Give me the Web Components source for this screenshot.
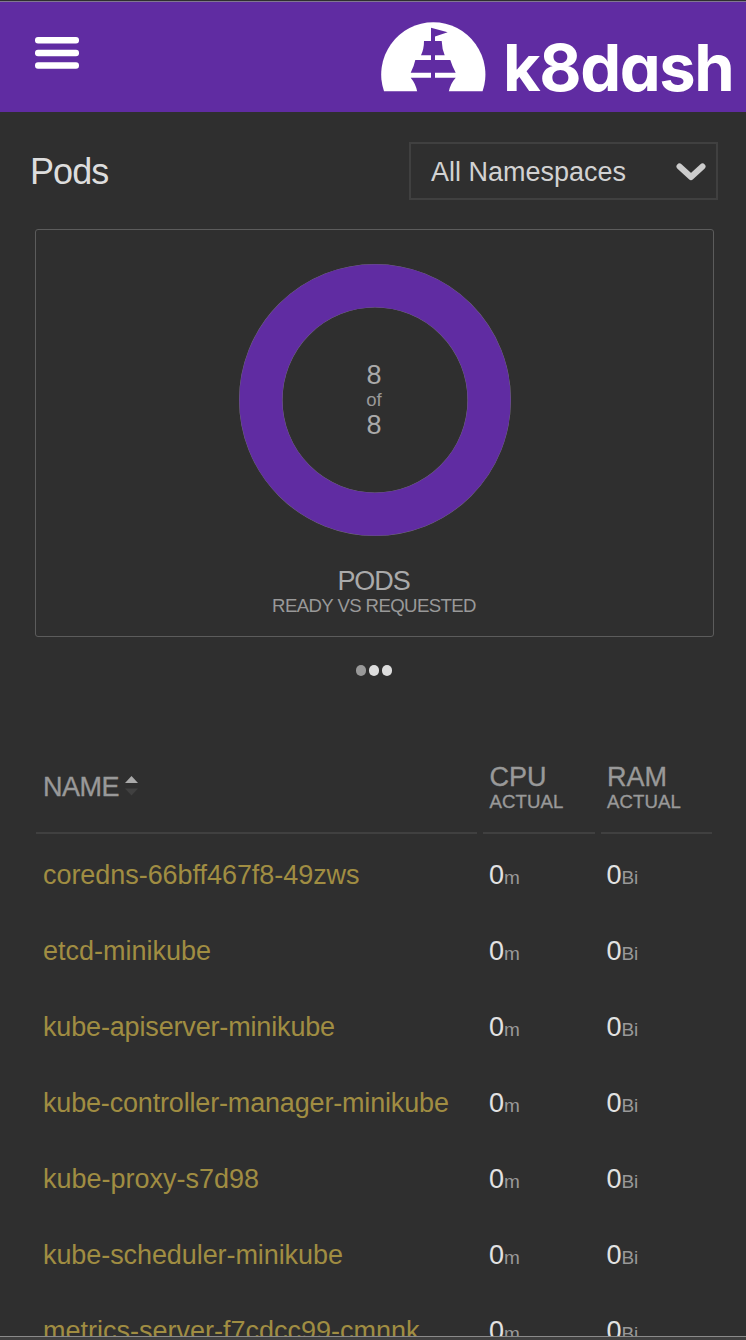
<!DOCTYPE html>
<html lang="en">
<head>
<meta charset="utf-8">
<title>k8dash</title>
<style>
html,body{margin:0;height:1340px;overflow:hidden;background:#2f2f2f}
body{font-family:"Liberation Sans",Arial,sans-serif;color:#ddd}
</style>
</head>
<body>
<k8-app></k8-app>
<script>
function define(name, html, setup) {
  const t = document.createElement('template');
  t.innerHTML = html;
  customElements.define(name, class extends HTMLElement {
    constructor() {
      super();
      this.attachShadow({mode: 'open'}).append(t.content.cloneNode(true));
    }
    connectedCallback() { if (setup) setup(this.shadowRoot, this); }
  });
}

define('k8-menu-button', `
<style>:host{display:block;width:44px;height:32px}svg{display:block}</style>
<svg width="44" height="32" viewBox="0 0 44 32" fill="#fff"><rect y="0" width="44" height="6.6" rx="3"/><rect y="12.7" width="44" height="6.6" rx="3"/><rect y="25.2" width="44" height="6.6" rx="3"/></svg>`);

define('k8-logo', `
<style>
:host{display:flex;align-items:flex-start;color:#fff}
svg{display:block;margin-top:20px}
span{font:700 65px/79px Inter,"Noto Sans",sans-serif;font-feature-settings:"cv11";letter-spacing:-1.400px;margin:26px -1.400px 0 17px;white-space:nowrap}
</style>
<svg width="105" height="70" viewBox="0 0 105 70"><path fill="#fff" d="M3 69.300A52.100 52.100 0 1 1 101.600 69.300Z"/>
<path fill="#602ca2" d="M50 5.700L66.700 10.300 54 14.500V19h6.700q.3 8 3 14.300H54V38h15.300q2 6.500 5.400 12.700H54v5h20.700q-5.500 6-7 14.300H36.300Q35 62 29.700 55.700H50v-5H29.700Q33 44.500 34.300 38H50v-4.700H40Q43 27 43 19h7z"/></svg>
<span>k8dash</span>`);

define('k8-header', `
<style>:host{display:flex;box-sizing:border-box;height:112px;border-top:1px solid #2f2f2f;background:#602ca2;box-shadow:inset 0 1px #817791;justify-content:space-between;align-items:flex-start;padding:1px 14px 0 35px}
k8-menu-button{margin-top:35px}</style>
<k8-menu-button></k8-menu-button><k8-logo></k8-logo>`);

define('k8-select', `
<style>:host{display:flex;box-sizing:border-box;width:309px;height:58px;border:2px solid #404040;align-items:center;justify-content:space-between;padding:2px 10px 0 20px;font-size:27px;line-height:32px;color:#d2d2d2}</style>
<slot></slot><svg width="30" height="18" viewBox="0 0 30 18" fill="none" stroke="#ccc" stroke-width="6" stroke-linecap="round" stroke-linejoin="round"><path d="M3.500 3.500L15 14 26.500 3.500"/></svg>`);

define('k8-toolbar', `
<style>:host{display:flex;height:58px;padding:30px 28px 0 30px;justify-content:space-between;align-items:center}
h1{margin:2px 0 0;font-weight:400;font-size:36px;line-height:42px;letter-spacing:-.9px;color:#ddd}</style>
<h1>Pods</h1><k8-select>All Namespaces</k8-select>`);

define('k8-donut', `
<style>:host{display:grid;width:272px;height:272px;place-items:center}
svg,.t{grid-area:1/1}
.t{text-align:center;font-size:27px;line-height:25px;color:#aaa;margin-right:2px}
small{display:block;font-size:18.500px;line-height:23px;padding-bottom:2px;color:#999}</style>
<svg width="272" height="272"><circle cx="136" cy="136" r="114.200" fill="none" stroke="#777" stroke-width="43.600"/><circle cx="136" cy="136" r="114.200" fill="none" stroke="#602ca2" stroke-width="43"/></svg>
<div class="t">8<small>of</small>8</div>`);

define('k8-chart-card', `
<style>:host{display:flex;flex-direction:column;align-items:center;box-sizing:border-box;width:679px;height:408px;margin:29px 0 0 35px;border:1px solid #5c5c5c;border-radius:3px;padding-top:34px}
k8-donut{margin-left:1px}
.a{font-size:27px;line-height:26px;margin:32px 2px 0 0;color:#aaa;letter-spacing:-1.100px}
.b{font-size:18.600px;line-height:24px;color:#999;letter-spacing:-.600px;margin-right:1px}</style>
<k8-donut></k8-donut><div class="a">PODS</div><div class="b">READY VS REQUESTED</div>`);

define('k8-dots', `
<style>:host{display:flex;justify-content:center;gap:2.700px;height:10.500px;margin:28px 0 0 2px}
i{width:10.500px;height:10.500px;border-radius:50%;background:#ddd}i:first-of-type{background:#999}</style>
<i></i><i></i><i></i>`);

define('k8-heading', `
<style>:host{display:flex;box-sizing:border-box;height:94px;padding:5px 0 0 6.500px;border-bottom:2px solid #404040;flex-direction:column;justify-content:center;font-size:27px;line-height:27px;color:#999;-webkit-text-stroke:.35px #999}
:host([sorted]){padding:3px 0 0 7px;letter-spacing:-.500px}
.m{display:flex;align-items:center;gap:6px}
svg{margin-top:-2px}
.s{font-size:18.600px;line-height:22px;letter-spacing:.1px}.s:empty,svg[hidden]{display:none}</style>
<div class="m"><slot></slot><svg hidden width="13" height="20"><path fill="#aaa" stroke="none" d="M0 7L6.500 0 13 7z"/><path fill="#404040" stroke="none" d="M0 12.500h13L6.500 19.500z"/></svg></div><div class="s"></div>`,
(r, h) => {
  r.querySelector('.s').textContent = h.getAttribute('sub') || '';
  if (h.hasAttribute('sorted')) r.querySelector('svg').removeAttribute('hidden');
});

define('k8-row', `
<style>:host{display:grid;grid-template-columns:441px 111.500px 111.500px;gap:6px;height:76px;align-items:center;font-size:27px;line-height:32px}
div{padding-left:6px;white-space:nowrap}
.n{color:#a08d42;padding:0 0 2px 7px}
.v{color:#e2e2e2;padding-top:1px}
small{font-size:19px;color:#999;letter-spacing:-.2px}</style>
<div class="n"><slot></slot></div><div class="v">0<small>m</small></div><div class="v">0<small>Bi</small></div>`,
(r, h) => { r.querySelector('.n').style.letterSpacing = (h.getAttribute('track') || 0) + 'px'; });

define('k8-table', `
<style>:host{display:block;margin:64px 0 0 36px;width:677px}
.h{display:grid;grid-template-columns:441px 111.500px 111.500px;gap:6px;margin-bottom:4px}</style>
<div class="h"><k8-heading sorted>NAME</k8-heading><k8-heading sub="ACTUAL">CPU</k8-heading><k8-heading sub="ACTUAL">RAM</k8-heading></div>
<k8-row track="-.05">coredns-66bff467f8-49zws</k8-row>
<k8-row>etcd-minikube</k8-row>
<k8-row track="-.16">kube-apiserver-minikube</k8-row>
<k8-row track="-.17">kube-controller-manager-minikube</k8-row>
<k8-row>kube-proxy-s7d98</k8-row>
<k8-row track="-.08">kube-scheduler-minikube</k8-row>
<k8-row>metrics-server-f7cdcc99-cmnnk</k8-row>`);

define('k8-app', `
<style>:host{display:flex;flex-direction:column;height:1340px;overflow:hidden}
main{flex:1;min-height:0;overflow:hidden}
footer{height:3px;border-top:1px solid #8a8a8a;background:#404040}</style>
<k8-header></k8-header>
<main><k8-toolbar></k8-toolbar><k8-chart-card></k8-chart-card><k8-dots></k8-dots><k8-table></k8-table></main>
<footer></footer>`);
</script>
</body>
</html>
